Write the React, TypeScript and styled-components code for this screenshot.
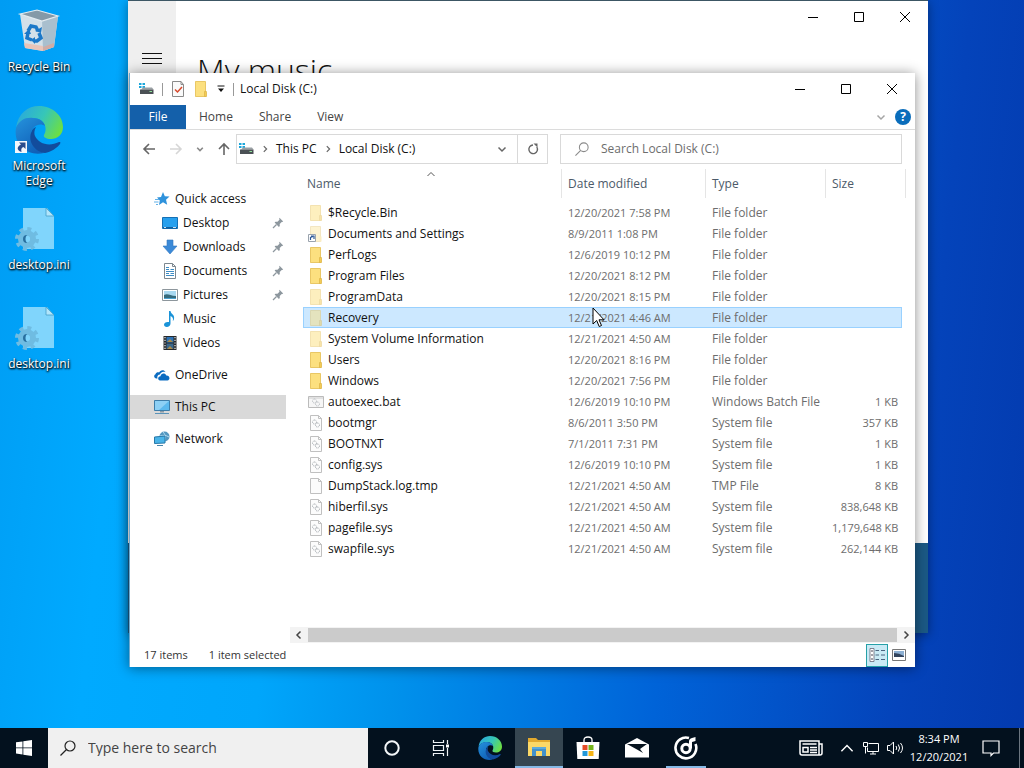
import React from 'react';
import styled, { createGlobalStyle } from 'styled-components';

const GlobalStyle = createGlobalStyle`
  * {
    box-sizing: border-box;
  }
  body {
    margin: 0;
    font-family: "Open Sans", "Noto Sans", sans-serif;
    font-size: 12px;
    line-height: 16px;
    color: #111;
  }
  button, input {
    font: inherit;
    color: inherit;
    border: 0;
    padding: 0;
    margin: 0;
    background: none;
  }
  svg {
    display: block;
    flex: none;
  }
`

/* ---------- icons ---------- */

interface IconProps {
  size?: number;
}

const DriveIcon = () => (
  <svg width="16" height="16" viewBox="0 0 16 16">
    <path d="M1 2h2.5v2H1zM4.500 2H7v2H4.500zM1 5h2.500v2H1zM4.500 5H7v2H4.500z" fill="#1ba7dc" />
    <path d="M3 8.500L5 6.500h9l1.500 2z" fill="#9ba1a5" />
    <path d="M2 8.500h13.500v4.500H2z" fill="#4b5155" />
    <path d="M11.500 10.500h2.500" stroke="#8fe39a" />
  </svg>
);

const PropertiesIcon = () => (
  <svg width="14" height="16" viewBox="0 0 14 16">
    <path d="M1.500 .5h8.500L12.500 3.500v12h-11z" fill="#fafafa" stroke="#8a8a8a" />
    <path d="M10 .5v3h2.500" fill="none" stroke="#8a8a8a" />
    <path d="M4 8.500l2.500 2.500L11 6" fill="none" stroke="#d6492c" strokeWidth="1.500" />
  </svg>
);

const FolderIcon = ({ faded }: { faded?: boolean }) => (
  <svg width="16" height="16" viewBox="0 0 16 16" opacity={faded ? 0.5 : 1}>
    <path d="M2 .5h10.500v10.500l1 .5v4H2z" fill="#fce07f" />
    <path d="M2.500 .5h10v15h-10z" fill="none" stroke="#e9c765" />
    <path d="M11.500 10.500h2v5h-2z" fill="#f3cb55" stroke="#d9ae3f" strokeWidth=".6" />
  </svg>
);

const ShortcutFolderIcon = () => (
  <svg width="16" height="16" viewBox="0 0 16 16">
    <g opacity=".5">
      <path d="M2.500 .5h10v15h-10z" fill="#fce9a5" stroke="#e9cf86" />
      <path d="M11.500 10.500h2v5h-2z" fill="#f9dc87" />
    </g>
    <path d="M.5 8.500h7v7h-7z" fill="#fff" stroke="#9aa3ad" />
    <path d="M2.500 14v-2.500L5 10.500M3 10h3v3" fill="none" stroke="#2b5797" strokeWidth="1.200" />
  </svg>
);

const GearShape = ({ color }: { color: string }) => (
  <g fill="none" stroke={color}>
    <circle cx="6.500" cy="7" r="2" strokeDasharray="1 .6" />
    <circle cx="9.500" cy="10" r="2" strokeDasharray="1 .6" />
  </g>
);

const FileIcon = ({ kind }: { kind: string }) => {
  if (kind === 'bat') {
    return (
      <svg width="16" height="16" viewBox="0 0 16 16">
        <path d="M.5 2.500h15v11H.5z" fill="#f6f6f6" stroke="#bbb" />
        <path d="M1 4h14" stroke="#ccc" />
        <GearShape color="#b4b9be" />
      </svg>
    );
  }
  return (
    <svg width="16" height="16" viewBox="0 0 16 16">
      <path d="M2.500 .5h8l3 3v12h-11z" fill="#fcfcfc" stroke="#c0c0c0" />
      <path d="M10.500 .5v3h3" fill="none" stroke="#c0c0c0" />
      {kind === 'sys' && <GearShape color="#a4a9ae" />}
    </svg>
  );
};

const StarIcon = () => (
  <svg width="16" height="16" viewBox="0 0 16 16">
    <path d="M9 1l1.800 4.200 4.700.3-3.500 3.200 1.200 5L9 11.200 5 14l.8-4.600L3 6.500l4-.6z" fill="#2e92dc" />
    <path d="M1 8.500h4M0 11h4.500M2 13.500h2" stroke="#62b1e8" />
  </svg>
);

const DesktopIcon = () => (
  <svg width="16" height="16" viewBox="0 0 16 16">
    <path d="M.5 2.500h15v11H.5z" fill="#27a0ee" stroke="#1570b5" />
    <path d="M1 12h14v1.500H1z" fill="#0f5f9f" />
    <path d="M2 12.500h2M11 12.500h3" stroke="#fff" strokeWidth=".8" />
  </svg>
);

const DownloadIcon = () => (
  <svg width="16" height="16" viewBox="0 0 16 16">
    <path d="M5 1h6v6h4l-7 8-7-8h4z" fill="#3b8ad8" stroke="#3277bd" strokeWidth=".6" />
  </svg>
);

const DocumentIcon = () => (
  <svg width="16" height="16" viewBox="0 0 16 16">
    <path d="M2.500 .5h8l3 3v12h-11z" fill="#fff" stroke="#7d8890" />
    <path d="M10.500 .5v3h3" fill="none" stroke="#7d8890" />
    <path d="M4 4.500h3M4 6.500h3M8.500 6.500h3.500M4 8.500h8M4 10.500h3M8.500 10.500h3.500M4 12.500h8" stroke="#3d8cc4" />
  </svg>
);

const PictureIcon = () => (
  <svg width="16" height="16" viewBox="0 0 16 16">
    <path d="M.5 2.500h15v11H.5z" fill="#fff" stroke="#8d969c" />
    <path d="M2 4h12v8H2z" fill="#a8d8f0" />
    <path d="M2 8c4-2 6 1 12 1v3H2z" fill="#356a7c" />
    <path d="M2 11h12v1H2z" fill="#4aa0cf" />
  </svg>
);

const MusicIcon = () => (
  <svg width="16" height="16" viewBox="0 0 16 16">
    <path d="M7 0h1.500c.3 3 4.500 3.500 3.500 8-.2 1-.6 1.500-1.200 2 .8-3-.4-4-2.300-5v7.500c0 2-1.800 3.500-3.700 3.500C3 16 2 15 2 13.800c0-1.800 2-3.300 5-2.800z" fill="#1b93d8" />
  </svg>
);

const VideoIcon = () => (
  <svg width="16" height="16" viewBox="0 0 16 16">
    <path d="M1.500 1h13v14h-13z" fill="#26282b" />
    <path d="M4.500 2h7v5.500h-7z" fill="#2d72b5" />
    <path d="M4.500 8.500h7V14h-7z" fill="#3a678c" />
    <path d="M5 7l3-3 3 3zM5 14l3-3 3 3z" fill="#a98a49" />
    <path d="M3 2v13M13 2v13" stroke="#eee" strokeWidth="1.200" strokeDasharray="1.200 1.500" />
  </svg>
);

const OneDriveIcon = () => (
  <svg width="16" height="16" viewBox="0 0 16 16">
    <path d="M3.500 11.500H2A2.200 2.200 0 0 1 1.500 7.300C2 5.500 4 5 5 5.500 6 3 10 2 11.500 5 8 4 6.500 6 6 7.500 3.500 7.500 3 10 3.500 11.500z" fill="#0b6cc1" />
    <path d="M6 13.500c-2.500 0-2.500-4 .5-4.200C7 6 11 5.500 12.300 8.500c3-.5 4.700 4 1.200 5z" fill="#0b6cc1" />
  </svg>
);

const ComputerIcon = () => (
  <svg width="16" height="16" viewBox="0 0 16 16">
    <path d="M.5 1.500h15v10H.5z" fill="#5bb9ee" stroke="#3d7da9" />
    <path d="M1 2h14L5 11H1z" fill="#8dd0f5" />
    <path d="M6 12h4v1.500H6z" fill="#8a9aa5" />
    <path d="M1 14.500h14" stroke="#5b93b8" />
  </svg>
);

const NetworkIcon = () => (
  <svg width="16" height="16" viewBox="0 0 16 16">
    <circle cx="10.500" cy="5.500" r="5" fill="#5397c0" />
    <path d="M6 5c3-1 6-1 9 1M9 1c3 3 3 7 1 10" fill="none" stroke="#b3dcf2" />
    <path d="M.5 6l10.500-1v7L.5 12.500z" fill="#4ab4e8" stroke="#2778a8" />
    <path d="M3 14.500h6" stroke="#4784a9" />
  </svg>
);

const PinIcon = () => (
  <svg width="12" height="12" viewBox="0 0 12 12">
    <path d="M7.500 .8l3.700 3.700-1 .6-.5-.1-2 2 .1 2-.9.900L2.600 5.600l.9-.9 2 .1 2-2-.3-1z" fill="#8d979e" />
    <path d="M4.500 7.500L1 11" stroke="#8d979e" strokeWidth="1.200" />
  </svg>
);

interface ChevronProps {
  direction: 'up' | 'down' | 'left' | 'right';
  size?: number;
  color?: string;
  weight?: number;
}

const chevronPaths = {
  up: 'M1.500 7L5 3.500 8.500 7',
  down: 'M1.500 3.500L5 7l3.500-3.500',
  left: 'M6.500 1.500L3 5l3.500 3.500',
  right: 'M3.500 1.500L7 5 3.500 8.500',
};

const Chevron = ({ direction, size = 10, color = '#666', weight = 1.5 }: ChevronProps) => (
  <svg width={size} height={size} viewBox="0 0 10 10">
    <path d={chevronPaths[direction]} fill="none" stroke={color} strokeWidth={weight} />
  </svg>
);

const arrowPaths = {
  left: 'M13 7H2M7 2L2 7l5 5',
  right: 'M1 7h11M7 2l5 5-5 5',
  up: 'M7 13V2M2 7l5-5 5 5',
};

const Arrow = ({ direction, color }: { direction: 'left' | 'right' | 'up'; color: string }) => (
  <svg width="14" height="14" viewBox="0 0 14 14">
    <path d={arrowPaths[direction]} fill="none" stroke={color} strokeWidth="1.600" />
  </svg>
);

const SearchIcon = ({ size = 14, color = '#8a8a8a' }: { size?: number; color?: string }) => (
  <svg width={size} height={size} viewBox="0 0 16 16">
    <circle cx="10" cy="6" r="5" fill="none" stroke={color} strokeWidth="1.200" />
    <path d="M6.500 9.500L.5 15.500" stroke={color} strokeWidth="1.200" />
  </svg>
);

const RefreshIcon = () => (
  <svg width="12" height="12" viewBox="0 0 12 12">
    <path d="M9.800 4A4.300 4.300 0 1 1 6 2" fill="none" stroke="#666" strokeWidth="1.400" />
    <path d="M6.500 .5h4v4z" fill="#666" />
  </svg>
);

const EdgeIcon = ({ size = 24 }: IconProps) => (
  <svg width={size} height={size} viewBox="0 0 48 48">
    <defs>
      <linearGradient id="edgeTop" x1="0" y1=".3" x2="1" y2=".7">
        <stop offset="0" stopColor="#2aa9dc" />
        <stop offset=".5" stopColor="#36c6b8" />
        <stop offset="1" stopColor="#70e03c" />
      </linearGradient>
      <linearGradient id="edgeLeft" x1="0" y1="0" x2=".6" y2="1">
        <stop offset="0" stopColor="#2592dc" />
        <stop offset="1" stopColor="#1060b8" />
      </linearGradient>
    </defs>
    <path d="M1 22C3 7 13 0 24 0c14 0 24 10 24 21 0 8-6 12-12 12-5 0-8-2-7-4 4-6 1-17-11-17C9 12 3 17 1 22z" fill="url(#edgeTop)" />
    <path d="M1 22c3-8 10-11 17-10 7 0 11 4 12 8-5-4-14 0-14 9 0 9 6 15 13 18C13 51-2 39 1 22z" fill="url(#edgeLeft)" />
    <path d="M16 27c-3 9 4 19 14 20 6-1 12-5 15-9 1-2 0-2-1-2-10 5-20 2-24-6-1-2-1-6 1-9-3 1-4 3-5 6z" fill="#124c9c" />
  </svg>
);

const RecycleBinIcon = () => (
  <svg width="48" height="48" viewBox="0 0 48 48">
    <path d="M5 7l5 34 18 3 11-4 4-31-16 5z" fill="#d3e0e9" />
    <path d="M27 13l1 31 11-4 4-31z" fill="#a9bfce" />
    <path d="M5 7l17-4 21 6-16 5z" fill="#8499a8" stroke="#e3ebf0" strokeWidth="1.200" />
    <path d="M9 36l19 3v5l-18-3z" fill="#e9c4b8" />
    <path d="M28 40l11-4v4l-11 4z" fill="#cfaca6" />
    <g fill="none" stroke="#1b78c8" strokeWidth="3.500">
      <path d="M13 24l3-5 5 1 2 4" />
      <path d="M24 26l2 5-4 3h-3" />
      <path d="M17 33l-5-2 1-5" />
    </g>
    <path d="M20 24l6 2 1-6zM20 30v7l-4-4zM9 27l5-5 2 5z" fill="#1b78c8" />
  </svg>
);

const IniIcon = () => (
  <svg width="48" height="48" viewBox="0 0 48 48">
    <path d="M8 3h24l7 8v33H8z" fill="#80d5fc" />
    <path d="M31 3v8h8z" fill="#b1e5fb" stroke="#459fc9" strokeWidth=".8" />
    <circle cx="12" cy="34" r="10" fill="none" stroke="#6fbce2" strokeWidth="4" strokeDasharray="3.930 3.920" />
    <circle cx="12" cy="34" r="6" fill="none" stroke="#6fbce2" strokeWidth="6" />
    <circle cx="12" cy="34" r="3" fill="#80d5fc" />
    <path d="M12 30a4 4 0 0 0 0 8 6 6 0 0 1 0-8z" fill="#286f9f" />
  </svg>
);

const ShortcutArrow = () => (
  <svg width="12" height="12" viewBox="0 0 12 12">
    <path d="M0 0h12v12H0z" fill="#f5f7fb" />
    <path d="M4 1.500h6.500V8L8.500 6C6 7 6 8.500 6.500 11 1 9 2 5.500 6 3.500z" fill="#2a4b8c" />
  </svg>
);

const WindowsIcon = () => (
  <svg width="16" height="16" viewBox="0 0 16 16">
    <path d="M0 2.300l6.500-.9v6.100H0zM7.300 1.300L16 0v7.500H7.300zM0 8.300h6.500v6.200L0 13.600zM7.300 8.300H16V16l-8.700-1.300z" fill="#fff" />
  </svg>
);

const CortanaIcon = () => (
  <svg width="16" height="16" viewBox="0 0 16 16">
    <circle cx="8" cy="8" r="6.700" fill="none" stroke="#f3f6f8" strokeWidth="2" />
  </svg>
);

const TaskViewIcon = () => (
  <svg width="18" height="16" viewBox="0 0 18 16">
    <path d="M1.500 0v2.500h10V0M1.500 5.500h10v5h-10zM1.500 16v-2.500h10V16M15.500 0v4M15.500 8v8" fill="none" stroke="#eef2f5" strokeWidth="1.200" />
    <path d="M14 4.500h3v3h-3z" fill="#fff" />
  </svg>
);

const ExplorerIcon = () => (
  <svg width="24" height="20" viewBox="0 0 24 20">
    <path d="M1 1h8l2 2h12v16H1z" fill="#e2a92e" />
    <path d="M1 5h22v14H1z" fill="#fbd867" />
    <path d="M5 19v-9h14v9h-4v-5H9v5z" fill="#4291c9" />
    <path d="M5 10h14v2H5z" fill="#5caadd" />
  </svg>
);

const StoreIcon = () => (
  <svg width="24" height="24" viewBox="0 0 24 24">
    <path d="M8 7V4q0-3 4-3t4 3v3" fill="none" stroke="#fff" strokeWidth="1.300" />
    <path d="M.5 6h23l-.8 17H1.300z" fill="#fff" />
    <path d="M6.500 9h5v5h-5z" fill="#e44d29" />
    <path d="M12.500 9h5v5h-5z" fill="#76b51b" />
    <path d="M6.500 15h5v5h-5z" fill="#2298d9" />
    <path d="M12.500 15h5v5h-5z" fill="#f7b516" />
  </svg>
);

const MailIcon = () => (
  <svg width="24" height="20" viewBox="0 0 24 20">
    <path d="M0 6.500L12 0l12 6.500V19.500H0z" fill="#fff" />
    <path d="M2 6h20l-7 5 3 4-6-3.500z" fill="#07141f" />
  </svg>
);

const GrooveIcon = () => (
  <svg width="24" height="24" viewBox="0 0 24 24">
    <path d="M15 2A10.400 10.400 0 1 0 21.500 8" fill="none" stroke="#fff" strokeWidth="2.600" />
    <circle cx="12" cy="12.500" r="4.200" fill="none" stroke="#fff" strokeWidth="3" />
    <path d="M15 12V5.500q0-3 3-3.500l3.500-1v4l-3.500 1v6.500z" fill="#fff" />
  </svg>
);

const NewsIcon = () => (
  <svg width="24" height="16" viewBox="0 0 24 16" fill="none" stroke="#fff">
    <path d="M1 1h19v14H3q-2 0-2-2zM20 4h3v9q0 2-2 2h-2" strokeWidth="1.500" />
    <path d="M3.500 4h14M11 7.500h7M11 10h7M11 12.500h7" strokeWidth="1.300" />
    <path d="M4 7.500h5v4.500H4z" strokeWidth="1.500" />
  </svg>
);

const LanIcon = () => (
  <svg width="16" height="14" viewBox="0 0 16 14" fill="none" stroke="#fff">
    <path d="M5.500 2.500h10v8H4.500V6.500M.5 1.500h4v4h-4zM2.500 5.500v7M7 13h6M10 10.500V13" />
  </svg>
);

const VolumeIcon = () => (
  <svg width="17" height="14" viewBox="0 0 17 14" fill="none" stroke="#fff">
    <path d="M.5 4.500H3L6.500 1v12L3 9.500H.5zM9 5q1.500 2 0 4M11.300 3.500q2.500 3.500 0 7M13.500 2q4 5 0 10" />
  </svg>
);

const ActionIcon = () => (
  <svg width="18" height="17" viewBox="0 0 18 17">
    <path d="M1 1h16v12h-5.500L9 15.500V13H1z" fill="none" stroke="#fff" strokeWidth="1.200" />
  </svg>
);

const DetailsIcon = () => (
  <svg width="16" height="14" viewBox="0 0 16 14">
    <path d="M1 .5h4v13H1z" fill="#fff" stroke="#667" strokeWidth=".8" />
    <path d="M2 3h2M2 7h2M2 11h2" stroke="#445" />
    <path d="M6.500 2.500h3.500M12 2.500h4M6.500 7h3.500M12 7h4M6.500 11.500h3.500M12 11.500h4" stroke="#4a6480" />
  </svg>
);

const LargeIcon = () => (
  <svg width="14" height="12" viewBox="0 0 14 12">
    <path d="M.5 .5h13v11H.5z" fill="#fff" stroke="#777" />
    <path d="M2 2h10v6H2z" fill="#8db0d3" />
    <path d="M2 4q5 0 10 3v1H2z" fill="#33445d" />
  </svg>
);

/* ---------- desktop ---------- */

const Desktop = styled.div`
  position: relative;
  height: 100vh;
  overflow: hidden;
  display: flex;
  flex-direction: column;
  background: linear-gradient(96deg, #009cf3 0%, #00aaff 14%, #00a6fb 30%, #0092ec 42%, #0063d8 66%, #0443ba 88%, #033aae 100%);
`

const IconColumn = styled.div`
  flex: 1;
  padding-top: 7px;
  display: grid;
  grid-auto-rows: 99px;
  align-content: start;
  width: 78px;
`

const DesktopItem = styled.button`
  position: relative;
  display: flex;
  flex-direction: column;
  align-items: center;
  justify-content: flex-start;
  gap: 4px;
  color: #fff;
  line-height: 15px;
  text-shadow: 0 1px 2px #000, 1px 1px 2px #000;
`

const ShortcutBadge = styled.span`
  position: absolute;
  left: 15px;
  top: 35px;
`

const AppWindow = styled.div`
  position: absolute;
  display: flex;
  flex-direction: column;
  background: #fff;
`

const MusicWindow = styled(AppWindow)`
  left: 128px;
  right: 96px;
  top: 0;
  bottom: 135px;
  border-top: 1px solid #3c5664;
  box-shadow: 0 2px 10px rgba(0, 0, 0, 0.4);
`

const MusicBody = styled.div`
  flex: 1;
  display: flex;
`

const MusicRail = styled.div`
  width: 48px;
  padding: 51px 14px;
  background: #efefef;
`

const MusicMain = styled.div`
  flex: 1;
  display: flex;
  flex-direction: column;
`

const MusicTitle = styled.h1`
  margin: 13px 0 0 21px;
  font-size: 32px;
  line-height: 48px;
  font-weight: 300;
`

const MusicPlayer = styled.div`
  height: 90px;
  background: #1b5985;
`

const WindowControls = styled.div`
  display: flex;
  margin-left: auto;
`

const ControlButton = styled.button`
  width: 46px;
  height: 32px;
  display: grid;
  place-items: center;
`

/* ---------- explorer ---------- */

const ExplorerWindow = styled(AppWindow)`
  left: 129px;
  right: 109px;
  top: 73px;
  bottom: 101px;
  border-left: 1px solid #6da9cf;
  box-shadow: 0 1px 12px rgba(0, 0, 0, 0.45);
`

const TitleBar = styled.div`
  display: flex;
  align-items: center;
  height: 32px;
  padding-left: 8px;
`

const QuickTools = styled.div`
  display: flex;
  align-items: center;
  gap: 8px;
  margin-right: 6px;
`

const Separator = styled.span`
  width: 1px;
  height: 13px;
  background: #999;
`

const ToolButton = styled.button`
  display: grid;
  place-items: center;
`

const RibbonTabs = styled.div`
  display: flex;
  align-items: stretch;
  height: 25px;
  border-bottom: 1px solid #dcdcdc;
`

const RibbonTab = styled.button<{ $active?: boolean }>`
  min-width: ${props => (props.$active ? '56px' : '0')};
  padding: 0 13px;
  color: ${props => (props.$active ? '#fff' : '#444')};
  background: ${props => (props.$active ? '#1460aa' : 'transparent')};
`

const RibbonEnd = styled.div`
  display: flex;
  align-items: center;
  gap: 9px;
  margin-left: auto;
  padding-right: 4px;
`

const HelpButton = styled.button`
  width: 16px;
  height: 16px;
  border-radius: 50%;
  background: #0a6dbb;
  color: #fff;
  font-weight: 700;
  line-height: 16px;
`

const NavBar = styled.div`
  display: flex;
  align-items: center;
  height: 38px;
  padding: 0 13px 0 12px;
`

const NavButtons = styled.div`
  display: flex;
  align-items: center;
  gap: 13px;
  width: 94px;
`

const AddressBar = styled.div`
  flex: 1;
  display: flex;
  align-items: center;
  height: 30px;
  border: 1px solid #d9d9d9;
  padding-left: 1px;
`

const Crumbs = styled.div`
  flex: 1;
  display: flex;
  align-items: center;
  gap: 7px;
`

const AddressButton = styled.button<{ $divided?: boolean }>`
  width: 30px;
  height: 28px;
  display: grid;
  place-items: center;
  border-left: ${props => (props.$divided ? '1px solid #d9d9d9' : '0')};
`

const SearchBox = styled.label`
  flex: 0 1 342px;
  min-width: 0;
  display: flex;
  align-items: center;
  gap: 12px;
  height: 30px;
  margin-left: 12px;
  padding-left: 14px;
  border: 1px solid #d9d9d9;
`

const SearchInput = styled.input`
  flex: 1;
  min-width: 0;
  outline: 0;
  &::placeholder {
    color: #6d6d6d;
    opacity: 1;
  }
`

const ExplorerBody = styled.div`
  flex: 1;
  min-height: 0;
  display: flex;
`

const SidePane = styled.nav`
  width: 156px;
  padding-top: 19px;
  display: flex;
  flex-direction: column;
  gap: 8px;
`

const SideItem = styled.button<{ $nested?: boolean; $selected?: boolean }>`
  display: flex;
  align-items: center;
  gap: 5px;
  width: 100%;
  height: 24px;
  padding-left: ${props => (props.$nested ? '32px' : '24px')};
  padding-right: 2px;
  text-align: left;
  background: ${props => (props.$selected ? '#d9d9d9' : 'transparent')};
  & > span {
    flex: 1;
  }
`

const FilePane = styled.div`
  flex: 1;
  min-width: 0;
  margin-left: 4px;
  display: flex;
  flex-direction: column;
`

const FileList = styled.div`
  flex: 1;
  padding: 1px 13px 0 13px;
`

const FileTable = styled.table`
  width: 100%;
  table-layout: fixed;
  border-collapse: separate;
  border-spacing: 0;
`

const HeadCell = styled.th<{ $width?: number }>`
  position: relative;
  width: ${props => (props.$width ? `${props.$width}px` : 'auto')};
  height: 29px;
  padding: 0 0 0 4px;
  font-weight: 400;
  text-align: left;
  color: #4c5a69;
  & + & {
    padding-left: 7px;
  }
  &::after {
    content: "";
    position: absolute;
    top: 0;
    right: -1px;
    bottom: 0;
    border-right: 1px solid #e5e5e5;
  }
  &:last-child::after {
    right: -4px;
  }
`

const SortMark = styled.span`
  position: absolute;
  left: 50%;
  top: 0;
  margin-left: -6px;
`

const FileRows = styled.tbody`
  &::before {
    content: "";
    display: table-row;
    height: 4px;
  }
`

const Row = styled.tr<{ $selected?: boolean }>`
  & > td {
    background: ${props => (props.$selected ? '#cce8ff' : 'transparent')};
    border: 0 solid ${props => (props.$selected ? '#99d1ff' : 'transparent')};
    border-width: 1px 0;
  }
  & > td:first-child {
    border-left-width: 1px;
  }
  & > td:last-child {
    border-right-width: 1px;
  }
`

const Cell = styled.td<{ $numeric?: boolean; $right?: boolean }>`
  height: 21px;
  padding: 0 3px 0 7px;
  color: #6d6d6d;
  font-size: ${props => (props.$numeric ? '11px' : '12px')};
  text-align: ${props => (props.$right ? 'right' : 'left')};
  white-space: nowrap;
`

const NameCell = styled(Cell)`
  padding-left: 4px;
  color: #111;
`

const NameLabel = styled.div`
  display: flex;
  align-items: center;
  gap: 4px;
`

const ScrollBar = styled.div`
  display: flex;
  height: 16px;
  background: #f3f3f3;
`

const ScrollButton = styled.button`
  width: 18px;
  display: grid;
  place-items: center;
`

const ScrollThumb = styled.div`
  flex: 1;
  margin: 1px 0;
  background: #cbcbcb;
`

const StatusBar = styled.div`
  display: flex;
  align-items: center;
  gap: 21px;
  height: 24px;
  padding-left: 14px;
  font-size: 11px;
  color: #333;
`

const ViewButtons = styled.div`
  display: flex;
  margin-left: auto;
  padding-right: 5px;
`

const ViewButton = styled.button<{ $active?: boolean }>`
  width: 22px;
  height: 23px;
  display: grid;
  place-items: center;
  border: ${props => (props.$active ? '1px solid #26a0a8' : '0')};
  background: ${props => (props.$active ? '#c9eaf5' : 'transparent')};
`

const Cursor = styled.svg`
  position: absolute;
  left: 592px;
  top: 307px;
`

/* ---------- taskbar ---------- */

const Taskbar = styled.div`
  display: flex;
  height: 40px;
  background: #03111e;
  color: #fff;
`

const TaskButton = styled.button<{ $active?: boolean }>`
  width: 48px;
  height: 40px;
  margin-right: 1px;
  display: grid;
  place-items: center;
  background: ${props => (props.$active ? '#364651' : 'transparent')};
  border-bottom: ${props => (props.$active ? '2px solid #86b9e6' : '0')};
`

const StartButton = styled(TaskButton)`
  margin-right: 0;
`

const RunningButton = styled(TaskButton)`
  background: linear-gradient(#86b9e6, #86b9e6) center bottom / 40px 2px no-repeat;
`

const TaskSearch = styled.label`
  flex: 0 1 320px;
  min-width: 0;
  display: flex;
  align-items: center;
  gap: 12px;
  padding-left: 12px;
  background: #f0f0f0;
  color: #333;
  font-size: 14px;
`

const TaskSearchInput = styled(SearchInput)`
  &::placeholder {
    color: #444;
  }
`

const Tray = styled.div`
  display: flex;
  align-items: center;
  margin-left: auto;
`

const TrayButton = styled.button<{ $width?: number }>`
  width: ${props => props.$width || 24}px;
  height: 40px;
  display: grid;
  place-items: center;
`

const Clock = styled.button`
  width: 64px;
  font-size: 11px;
  line-height: 18px;
  text-align: center;
  white-space: nowrap;
`

const ShowDesktop = styled.button`
  width: 5px;
  height: 40px;
  margin-left: 8px;
  border-left: 1px solid #6c7680;
`

interface SideEntry {
  name: string;
  icon: React.ReactNode;
  pinned?: boolean;
}

const quickItems: SideEntry[] = [
  { name: 'Desktop', icon: <DesktopIcon />, pinned: true },
  { name: 'Downloads', icon: <DownloadIcon />, pinned: true },
  { name: 'Documents', icon: <DocumentIcon />, pinned: true },
  { name: 'Pictures', icon: <PictureIcon />, pinned: true },
  { name: 'Music', icon: <MusicIcon /> },
  { name: 'Videos', icon: <VideoIcon /> },
];

interface FileEntry {
  name: string;
  date: string;
  type: string;
  size?: string;
  kind: string;
}

const files: FileEntry[] = [
  { name: '$Recycle.Bin', date: '12/20/2021 7:58 PM', type: 'File folder', kind: 'hidden' },
  { name: 'Documents and Settings', date: '8/9/2011 1:08 PM', type: 'File folder', kind: 'link' },
  { name: 'PerfLogs', date: '12/6/2019 10:12 PM', type: 'File folder', kind: 'folder' },
  { name: 'Program Files', date: '12/20/2021 8:12 PM', type: 'File folder', kind: 'folder' },
  { name: 'ProgramData', date: '12/20/2021 8:15 PM', type: 'File folder', kind: 'hidden' },
  { name: 'Recovery', date: '12/21/2021 4:46 AM', type: 'File folder', kind: 'hidden' },
  { name: 'System Volume Information', date: '12/21/2021 4:50 AM', type: 'File folder', kind: 'hidden' },
  { name: 'Users', date: '12/20/2021 8:16 PM', type: 'File folder', kind: 'folder' },
  { name: 'Windows', date: '12/20/2021 7:56 PM', type: 'File folder', kind: 'folder' },
  { name: 'autoexec.bat', date: '12/6/2019 10:10 PM', type: 'Windows Batch File', size: '1 KB', kind: 'bat' },
  { name: 'bootmgr', date: '8/6/2011 3:50 PM', type: 'System file', size: '357 KB', kind: 'sys' },
  { name: 'BOOTNXT', date: '7/1/2011 7:31 PM', type: 'System file', size: '1 KB', kind: 'sys' },
  { name: 'config.sys', date: '12/6/2019 10:10 PM', type: 'System file', size: '1 KB', kind: 'sys' },
  { name: 'DumpStack.log.tmp', date: '12/21/2021 4:50 AM', type: 'TMP File', size: '8 KB', kind: 'file' },
  { name: 'hiberfil.sys', date: '12/21/2021 4:50 AM', type: 'System file', size: '838,648 KB', kind: 'sys' },
  { name: 'pagefile.sys', date: '12/21/2021 4:50 AM', type: 'System file', size: '1,179,648 KB', kind: 'sys' },
  { name: 'swapfile.sys', date: '12/21/2021 4:50 AM', type: 'System file', size: '262,144 KB', kind: 'sys' },
];

function EntryIcon({ kind }: { kind: string }) {
  if (kind === 'link') return <ShortcutFolderIcon />;
  if (kind === 'folder' || kind === 'hidden') return <FolderIcon faded={kind === 'hidden'} />;
  return <FileIcon kind={kind} />;
}

function Controls() {
  return (
    <WindowControls>
      <ControlButton aria-label="Minimize">
        <svg width="10" height="10" viewBox="0 0 10 10"><path d="M0 5.500h10" stroke="#000" /></svg>
      </ControlButton>
      <ControlButton aria-label="Maximize">
        <svg width="10" height="10" viewBox="0 0 10 10"><path d="M.5 .5h9v9h-9z" fill="none" stroke="#000" /></svg>
      </ControlButton>
      <ControlButton aria-label="Close">
        <svg width="10" height="10" viewBox="0 0 10 10"><path d="M0 0l10 10M10 0L0 10" stroke="#000" /></svg>
      </ControlButton>
    </WindowControls>
  );
}

function GrooveMusic() {
  return (
    <MusicWindow>
      <MusicBody>
        <MusicRail>
          <button aria-label="Menu">
            <svg width="20" height="12" viewBox="0 0 20 12">
              <path d="M0 1.500h20M0 6.500h20M0 11.500h20" stroke="#111" />
            </svg>
          </button>
        </MusicRail>
        <MusicMain>
          <Controls />
          <MusicTitle>My music</MusicTitle>
        </MusicMain>
      </MusicBody>
      <MusicPlayer />
    </MusicWindow>
  );
}

function SideBar() {
  return (
    <SidePane>
      <div>
        <SideItem><StarIcon /><span>Quick access</span></SideItem>
        {quickItems.map(item => (
          <SideItem $nested key={item.name}>
            {item.icon}
            <span>{item.name}</span>
            {item.pinned && <PinIcon />}
          </SideItem>
        ))}
      </div>
      <SideItem><OneDriveIcon /><span>OneDrive</span></SideItem>
      <SideItem $selected><ComputerIcon /><span>This PC</span></SideItem>
      <SideItem><NetworkIcon /><span>Network</span></SideItem>
    </SidePane>
  );
}

function Files() {
  return (
    <FileTable>
      <thead>
        <tr>
          <HeadCell>
            Name
            <SortMark><Chevron direction="up" color="#555" weight={1} /></SortMark>
          </HeadCell>
          <HeadCell $width={144}>Date modified</HeadCell>
          <HeadCell $width={120}>Type</HeadCell>
          <HeadCell $width={77}>Size</HeadCell>
        </tr>
      </thead>
      <FileRows>
        {files.map(file => (
          <Row $selected={file.name === 'Recovery'} key={file.name}>
            <NameCell>
              <NameLabel><EntryIcon kind={file.kind} />{file.name}</NameLabel>
            </NameCell>
            <Cell $numeric>{file.date}</Cell>
            <Cell>{file.type}</Cell>
            <Cell $numeric $right>{file.size}</Cell>
          </Row>
        ))}
      </FileRows>
    </FileTable>
  );
}

function Explorer() {
  return (
    <ExplorerWindow>
      <TitleBar>
        <QuickTools>
          <DriveIcon />
          <Separator />
          <ToolButton aria-label="Properties"><PropertiesIcon /></ToolButton>
          <ToolButton aria-label="New folder"><FolderIcon /></ToolButton>
          <ToolButton aria-label="Customize">
            <svg width="8" height="8" viewBox="0 0 8 8"><path d="M.5 1h7" stroke="#111" /><path d="M1 3.500h6L4 7z" fill="#111" /></svg>
          </ToolButton>
          <Separator />
        </QuickTools>
        Local Disk (C:)
        <Controls />
      </TitleBar>
      <RibbonTabs>
        <RibbonTab $active>File</RibbonTab>
        <RibbonTab>Home</RibbonTab>
        <RibbonTab>Share</RibbonTab>
        <RibbonTab>View</RibbonTab>
        <RibbonEnd>
          <Chevron direction="down" color="#a5a5a5" />
          <HelpButton aria-label="Help">?</HelpButton>
        </RibbonEnd>
      </RibbonTabs>
      <NavBar>
        <NavButtons>
          <ToolButton aria-label="Back"><Arrow direction="left" color="#666" /></ToolButton>
          <ToolButton aria-label="Forward"><Arrow direction="right" color="#d6d6d6" /></ToolButton>
          <ToolButton aria-label="Recent"><Chevron direction="down" size={8} color="#888" weight={2} /></ToolButton>
          <ToolButton aria-label="Up"><Arrow direction="up" color="#666" /></ToolButton>
        </NavButtons>
        <AddressBar>
          <Crumbs>
            <DriveIcon />
            <Chevron direction="right" size={8} />
            <button>This PC</button>
            <Chevron direction="right" size={8} />
            <button>Local Disk (C:)</button>
          </Crumbs>
          <AddressButton aria-label="Previous locations"><Chevron direction="down" /></AddressButton>
          <AddressButton $divided aria-label="Refresh"><RefreshIcon /></AddressButton>
        </AddressBar>
        <SearchBox>
          <SearchIcon />
          <SearchInput placeholder="Search Local Disk (C:)" aria-label="Search Local Disk (C:)" />
        </SearchBox>
      </NavBar>
      <ExplorerBody>
        <SideBar />
        <FilePane>
          <FileList>
            <Files />
          </FileList>
          <ScrollBar>
            <ScrollButton aria-label="Scroll left"><Chevron direction="left" color="#444" /></ScrollButton>
            <ScrollThumb />
            <ScrollButton aria-label="Scroll right"><Chevron direction="right" color="#444" /></ScrollButton>
          </ScrollBar>
        </FilePane>
      </ExplorerBody>
      <StatusBar>
        <span>17 items</span>
        <span>1 item selected</span>
        <ViewButtons>
          <ViewButton $active aria-label="Details"><DetailsIcon /></ViewButton>
          <ViewButton aria-label="Large icons"><LargeIcon /></ViewButton>
        </ViewButtons>
      </StatusBar>
    </ExplorerWindow>
  );
}

function App() {
  return (
    <Desktop>
      <GlobalStyle />
      <IconColumn>
        <DesktopItem><RecycleBinIcon />Recycle Bin</DesktopItem>
        <DesktopItem>
          <EdgeIcon size={48} />
          <ShortcutBadge><ShortcutArrow /></ShortcutBadge>
          Microsoft Edge
        </DesktopItem>
        <DesktopItem><IniIcon />desktop.ini</DesktopItem>
        <DesktopItem><IniIcon />desktop.ini</DesktopItem>
      </IconColumn>
      <GrooveMusic />
      <Explorer />
      <Cursor width="13" height="21" viewBox="0 0 13 21">
        <path d="M1 1v16l3.700-3.500 2.500 6 2.300-1-2.500-5.700H12z" fill="#fff" stroke="#000" />
      </Cursor>
      <Taskbar>
        <StartButton aria-label="Start"><WindowsIcon /></StartButton>
        <TaskSearch>
          <SearchIcon size={16} color="#222" />
          <TaskSearchInput placeholder="Type here to search" aria-label="Type here to search" />
        </TaskSearch>
        <TaskButton aria-label="Cortana"><CortanaIcon /></TaskButton>
        <TaskButton aria-label="Task View"><TaskViewIcon /></TaskButton>
        <TaskButton aria-label="Edge"><EdgeIcon /></TaskButton>
        <TaskButton $active aria-label="File Explorer"><ExplorerIcon /></TaskButton>
        <TaskButton aria-label="Store"><StoreIcon /></TaskButton>
        <TaskButton aria-label="Mail"><MailIcon /></TaskButton>
        <RunningButton aria-label="Groove Music"><GrooveIcon /></RunningButton>
        <Tray>
          <TrayButton $width={48} aria-label="News"><NewsIcon /></TrayButton>
          <TrayButton aria-label="Show hidden icons"><Chevron direction="up" size={16} color="#fff" weight={0.9} /></TrayButton>
          <TrayButton aria-label="Network"><LanIcon /></TrayButton>
          <TrayButton aria-label="Volume"><VolumeIcon /></TrayButton>
          <Clock>8:34 PM<br />12/20/2021</Clock>
          <TrayButton $width={40} aria-label="Notifications"><ActionIcon /></TrayButton>
          <ShowDesktop aria-label="Show desktop" />
        </Tray>
      </Taskbar>
    </Desktop>
  );
}

export default App;
